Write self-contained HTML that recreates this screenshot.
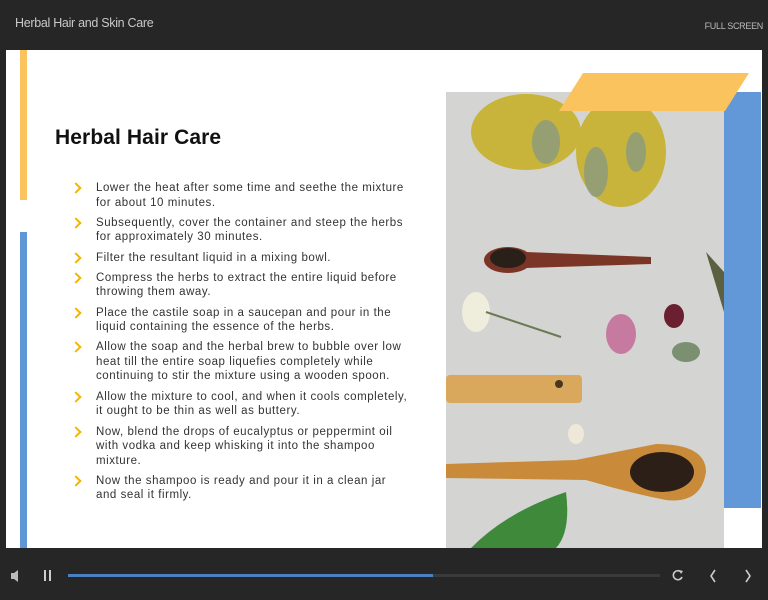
<!DOCTYPE html>
<html><head><meta charset="utf-8"><style>
*{margin:0;padding:0;box-sizing:border-box}
body{width:768px;height:600px;background:#262626;position:relative;overflow:hidden;font-family:"Liberation Sans",sans-serif}
.hdr{position:absolute;left:15px;top:16px;color:#c8c8c8;font-size:12.5px;letter-spacing:-0.3px}
.fs{position:absolute;right:5px;top:21px;color:#bbb;font-size:9px;letter-spacing:-0.3px}
.slide{position:absolute;left:6px;top:50px;width:756px;height:498px;background:#fff;overflow:hidden}
h1{position:absolute;left:49px;top:76px;font-size:21px;font-weight:bold;color:#111;letter-spacing:0.1px}
ul{position:absolute;left:64px;top:131px;width:360px;list-style:none}
li{position:relative;padding-left:26px;font-size:11.5px;line-height:14.5px;color:#333;margin-bottom:5.8px;white-space:nowrap;letter-spacing:0.55px}
li:before{content:"";position:absolute;left:2px;top:3px;width:6px;height:6px;border-right:2.5px solid #f5b400;border-top:2.5px solid #f5b400;transform:rotate(45deg)}
</style></head><body>
<div class="hdr">Herbal Hair and Skin Care</div>
<div class="fs">FULL SCREEN</div>
<div class="slide">
<div style="position:absolute;left:14px;top:0;width:7px;height:150px;background:#fbc35e"></div>
<div style="position:absolute;left:14px;top:182px;width:7px;height:316px;background:#5f97d6"></div>
<div style="position:absolute;left:718px;top:42px;width:37px;height:416px;background:#6298d8"></div>
<svg style="position:absolute;left:440px;top:42px" width="278" height="456" viewBox="0 0 278 456">
<rect width="278" height="456" fill="#d4d4d2"/>
<g fill="#c8b43a"><ellipse cx="80" cy="40" rx="55" ry="38"/><ellipse cx="175" cy="60" rx="45" ry="55"/></g>
<g fill="#8a9a80" opacity=".8"><ellipse cx="100" cy="50" rx="14" ry="22"/><ellipse cx="150" cy="80" rx="12" ry="25"/><ellipse cx="190" cy="60" rx="10" ry="20"/></g>
<g fill="#7b3526"><ellipse cx="62" cy="168" rx="24" ry="13"/><path d="M80 160 L205 165 L205 172 L80 176Z"/></g>
<ellipse cx="62" cy="166" rx="18" ry="10" fill="#2a201a"/>
<rect x="0" y="283" width="136" height="28" rx="4" fill="#d9a85c"/>
<circle cx="113" cy="292" r="4" fill="#4a3520"/>
<path d="M0 372 L130 368 Q180 358 210 352 Q260 352 260 380 Q255 412 220 408 Q180 400 140 388 L0 386Z" fill="#c98a3a"/>
<ellipse cx="216" cy="380" rx="32" ry="20" fill="#2c1f18"/>
<path d="M25 456 Q60 420 120 400 Q125 440 110 456Z" fill="#3e8a3a"/>
<ellipse cx="30" cy="220" rx="14" ry="20" fill="#efeedd"/>
<path d="M40 220 L115 245" stroke="#6a7a55" stroke-width="2"/>
<ellipse cx="175" cy="242" rx="15" ry="20" fill="#c77aa0"/>
<ellipse cx="228" cy="224" rx="10" ry="12" fill="#6a2030"/>
<ellipse cx="240" cy="260" rx="14" ry="10" fill="#7a9070"/>
<ellipse cx="130" cy="342" rx="8" ry="10" fill="#eee8d8"/>
<path d="M260 160 L278 180 L278 220 Z" fill="#5a6040"/>
</svg>
<svg style="position:absolute;left:553px;top:23px" width="192" height="38"><polygon points="24,0 190,0 166,38 0,38" fill="#fbc35e"/></svg>
<h1>Herbal Hair Care</h1>
<ul>
<li>Lower the heat after some time and seethe the mixture<br>for about 10 minutes.</li>
<li>Subsequently, cover the container and steep the herbs<br>for approximately 30 minutes.</li>
<li>Filter the resultant liquid in a mixing bowl.</li>
<li>Compress the herbs to extract the entire liquid before<br>throwing them away.</li>
<li>Place the castile soap in a saucepan and pour in the<br>liquid containing the essence of the herbs.</li>
<li>Allow the soap and the herbal brew to bubble over low<br>heat till the entire soap liquefies completely while<br>continuing to stir the mixture using a wooden spoon.</li>
<li>Allow the mixture to cool, and when it cools completely,<br>it ought to be thin as well as buttery.</li>
<li>Now, blend the drops of eucalyptus or peppermint oil<br>with vodka and keep whisking it into the shampoo<br>mixture.</li>
<li>Now the shampoo is ready and pour it in a clean jar<br>and seal it firmly.</li>
</ul>
</div>
<svg style="position:absolute;left:0;top:560px" width="768" height="32">
<path d="M11 13 h3 l4 -3 v12 l-4 -3 h-3z" fill="#bbb"/>
<rect x="44" y="10" width="2" height="11" fill="#ccc"/><rect x="49" y="10" width="2" height="11" fill="#ccc"/>
<rect x="68" y="14" width="592" height="3" fill="#3a3a3a"/>
<rect x="68" y="14" width="365" height="3" fill="#4a7fc1"/>
<path d="M681 12 A4.5 4.5 0 1 0 682 17" stroke="#ccc" stroke-width="1.6" fill="none"/><path d="M679 10 l4 1 -2 3z" fill="#ccc"/>
<path d="M715 10 l-4 6 4 6" stroke="#ccc" stroke-width="1.6" fill="none"/>
<path d="M746 10 l4 6 -4 6" stroke="#ccc" stroke-width="1.6" fill="none"/>
</svg>
</body></html>
